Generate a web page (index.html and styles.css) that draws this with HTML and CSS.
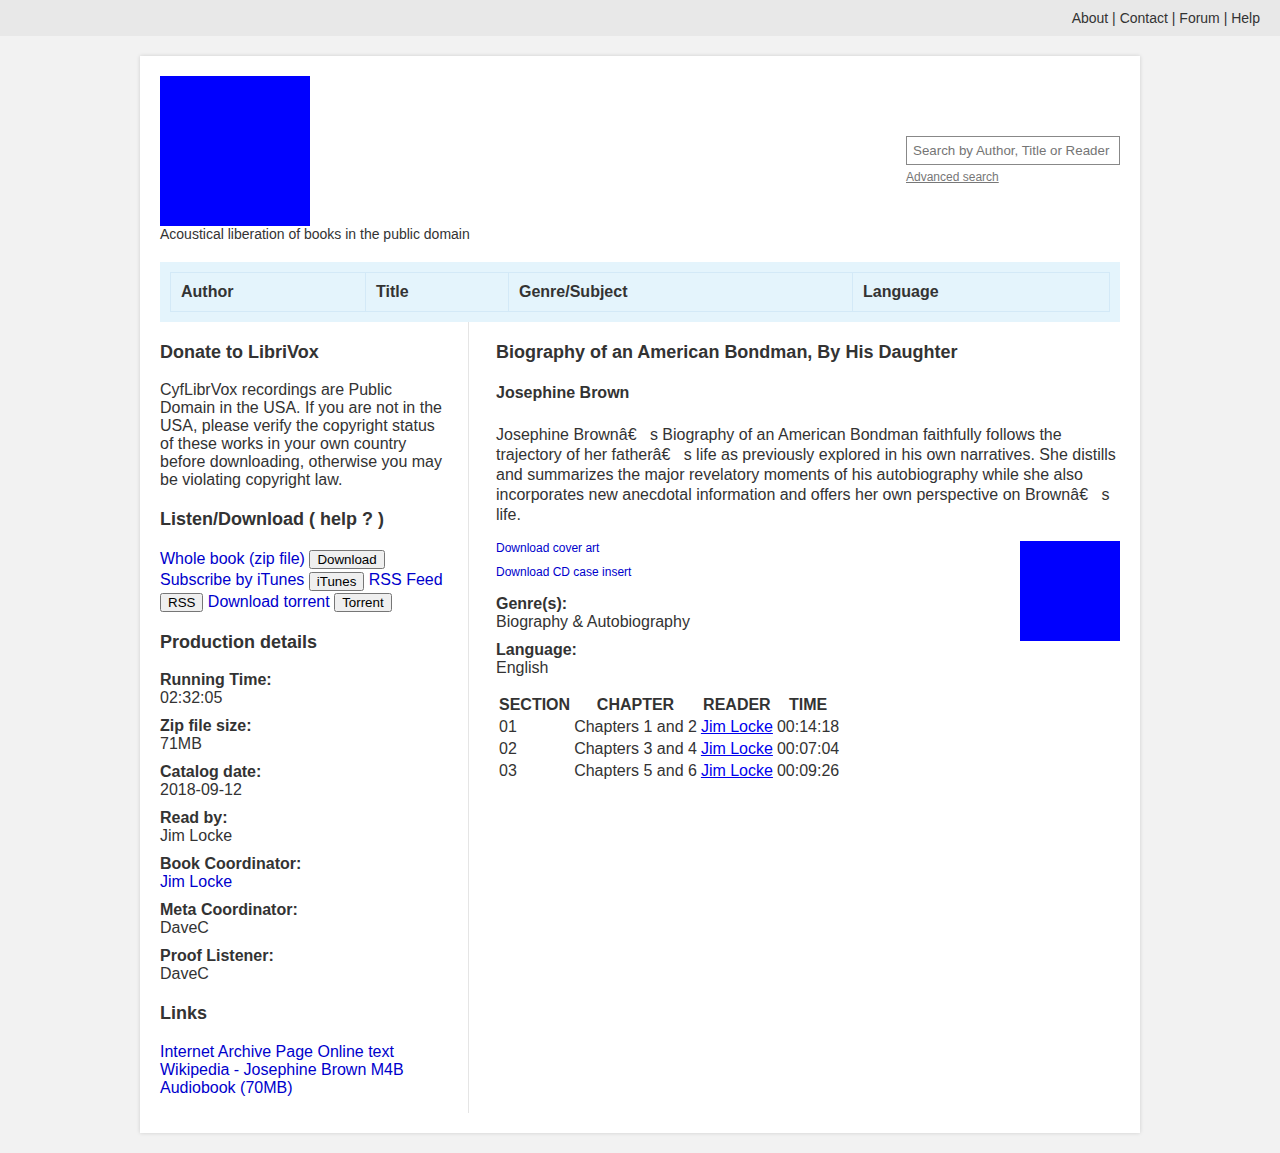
FILE: index.html
```html
<!DOCTYPE html>
<html lang="en">
<head>
    <meta charset="UTF-8">
    <meta name="viewport" content="width=device-width, initial-scale=1.0">
    <title>LibriVox</title>
    <link rel="stylesheet" href="styles.css">
</head>
<body>
    <div class="topbar">
        <a href="#">About</a> | <a href="#">Contact</a> | <a href="#">Forum</a> | <a href="#">Help</a>
    </div>
    <div id="wrap">
        <div class="header">
            <div class="brand">
                <div class="logo"></div>
                <div class="tagline">Acoustical liberation of books in the public domain</div>
            </div>
            <div class="search">
                <input type="text" placeholder="Search by Author, Title or Reader">
                <a href="#" class="adv">Advanced search</a>
            </div>
        </div>
        <div class="browse">
            <table>
                <tr>
                    <td class="c1">Author</td>
                    <td class="c2">Title</td>
                    <td class="c3">Genre/Subject</td>
                    <td class="c4">Language</td>
                </tr>
            </table>
        </div>
        <div class="main">
            <div class="sidebar">
                <h3>Donate to LibriVox</h3>
                <p>CyfLibrVox recordings are Public Domain in the USA. If you are not in the USA, please verify the copyright status of these works in your own country before downloading, otherwise you may be violating copyright law.</p>

                <h3>Listen/Download ( help ? )</h3>
                <p class="dl">
                    <a href="#">Whole book (zip file)</a> <button>Download</button>
                    <a href="#">Subscribe by iTunes</a> <button>iTunes</button>
                    <a href="#">RSS Feed</a> <button>RSS</button>
                    <a href="#">Download torrent</a> <button>Torrent</button>
                </p>

                <h3>Production details</h3>
                <div class="facts">
                    <div class="fact"><b>Running Time:</b><span>02:32:05</span></div>
                    <div class="fact"><b>Zip file size:</b><span>71MB</span></div>
                    <div class="fact"><b>Catalog date:</b><span>2018-09-12</span></div>
                    <div class="fact"><b>Read by:</b><span>Jim Locke</span></div>
                    <div class="fact"><b>Book Coordinator:</b><a href="#">Jim Locke</a></div>
                    <div class="fact"><b>Meta Coordinator:</b><span>DaveC</span></div>
                    <div class="fact"><b>Proof Listener:</b><span>DaveC</span></div>
                </div>

                <h3>Links</h3>
                <p class="links">
                    <a href="#">Internet Archive Page</a> <a href="#">Online text</a> <a href="#">Wikipedia - Josephine Brown</a> <a href="#">M4B Audiobook (70MB)</a>
                </p>
            </div>
            <div class="content">
                <h2>Biography of an American Bondman, By His Daughter</h2>
                <h4>Josephine Brown</h4>
                <p class="desc">Josephine Brownâ€&nbsp;&nbsp;&nbsp;s Biography of an American Bondman faithfully follows the trajectory of her fatherâ€&nbsp;&nbsp;&nbsp;s life as previously explored in his own narratives. She distills and summarizes the major revelatory moments of his autobiography while she also incorporates new anecdotal information and offers her own perspective on Brownâ€&nbsp;&nbsp;&nbsp;s life.</p>

                <div class="cover"></div>
                <div class="coverlinks">
                    <p><a href="#">Download cover art</a></p>
                    <p><a href="#">Download CD case insert</a></p>
                </div>
                <div class="fact"><b>Genre(s):</b><span>Biography &amp; Autobiography</span></div>
                <div class="fact"><b>Language:</b><span>English</span></div>

                <table class="chapters">
                    <tr><th>SECTION</th><th>CHAPTER</th><th>READER</th><th>TIME</th></tr>
                    <tr><td>01</td><td>Chapters 1 and 2</td><td><a href="#">Jim Locke</a></td><td>00:14:18</td></tr>
                    <tr><td>02</td><td>Chapters 3 and 4</td><td><a href="#">Jim Locke</a></td><td>00:07:04</td></tr>
                    <tr><td>03</td><td>Chapters 5 and 6</td><td><a href="#">Jim Locke</a></td><td>00:09:26</td></tr>
                </table>
            </div>
        </div>
    </div>
</body>
</html>
```

FILE: styles.css
```css
body{
    margin: 0;
    padding: 0;
    background: #f2f2f2;
    font-family: "Liberation Sans", Arial, sans-serif;
    color: #333;
    font-size: 16px;
}
a{
    color: #0000cc;
    text-decoration: none;
}
.topbar{
    height: 36px;
    line-height: 36px;
    background: #e8e8e8;
    text-align: right;
    padding-right: 20px;
    font-size: 14px;
}
.topbar a{
    color: #333;
}
#wrap{
    width: 960px;
    margin: 20px auto 20px;
    padding: 20px;
    background: #fff;
    box-shadow: 0 0 4px rgba(0,0,0,.15);
}
.header{
    display: flex;
    justify-content: space-between;
    align-items: center;
}
.logo{
    width: 150px;
    height: 150px;
    background: #0000ff;
}
.tagline{
    font-size: 14px;
    line-height: 16px;
}
.search{
    display: flex;
    flex-direction: column;
    align-items: flex-start;
    padding-top: 2px;
}
.search input{
    width: 214px;
    height: 29px;
    box-sizing: border-box;
    border: 1px solid #888;
    padding: 0 6px;
    font-family: "Liberation Sans", Arial, sans-serif;
    font-size: 13.33px;
    margin: 0 0 5px;
}
.search input::placeholder{
    color: #757575;
}
.adv{
    font-size: 12px;
    color: #777;
    text-decoration: underline;
}
.browse{
    margin-top: 20px;
    background: #e4f4fc;
    padding: 10px;
}
.browse table{
    width: 100%;
    border-collapse: collapse;
}
.browse td{
    border: 1px solid #d3e9f7;
    height: 38px;
    padding: 0 10px;
    font-weight: bold;
}
.c1{ width: 174px; }
.c2{ width: 122px; }
.c3{ width: 323px; }
.main{
    display: flex;
}
.sidebar{
    width: 288px;
    padding: 2px 20px 16px 0;
    border-right: 1px solid #e5e5e5;
}
.content{
    flex: 1;
    padding: 2px 0 0 27px;
}
h2, h3{
    font-size: 18px;
    margin: 20px 0 18px;
    line-height: 21px;
}
.sidebar h3:first-child, .content h2{
    margin-top: 18px;
}
h4{
    font-size: 16px;
    margin: 21px 0 23px;
}
p{
    margin: 18px 0;
}
.dl{
    line-height: 21px;
}
.dl button{
    height: 19px;
    padding: 0 6px;
    vertical-align: middle;
}
button{
    font-family: "Liberation Sans", Arial, sans-serif;
    font-size: 13.33px;
}
.fact{
    margin-bottom: 10px;
}
.fact b, .fact span, .fact a{
    display: block;
}
.links{
    margin: 19px 0 0;
}
.desc{
    line-height: 20px;
    margin-bottom: 16px;
}
.cover{
    float: right;
    width: 100px;
    height: 100px;
    background: #0000ff;
}
.coverlinks{
    margin-bottom: 16px;
}
.coverlinks p{
    font-size: 12px;
    line-height: 14px;
    margin: 0 0 10px;
}
.coverlinks p:last-child{
    margin-bottom: 0;
}
.chapters{
    margin-top: 16px;
}
.chapters td{
    text-align: left;
}
.chapters a{
    color: #0000ee;
    text-decoration: underline;
}
```
